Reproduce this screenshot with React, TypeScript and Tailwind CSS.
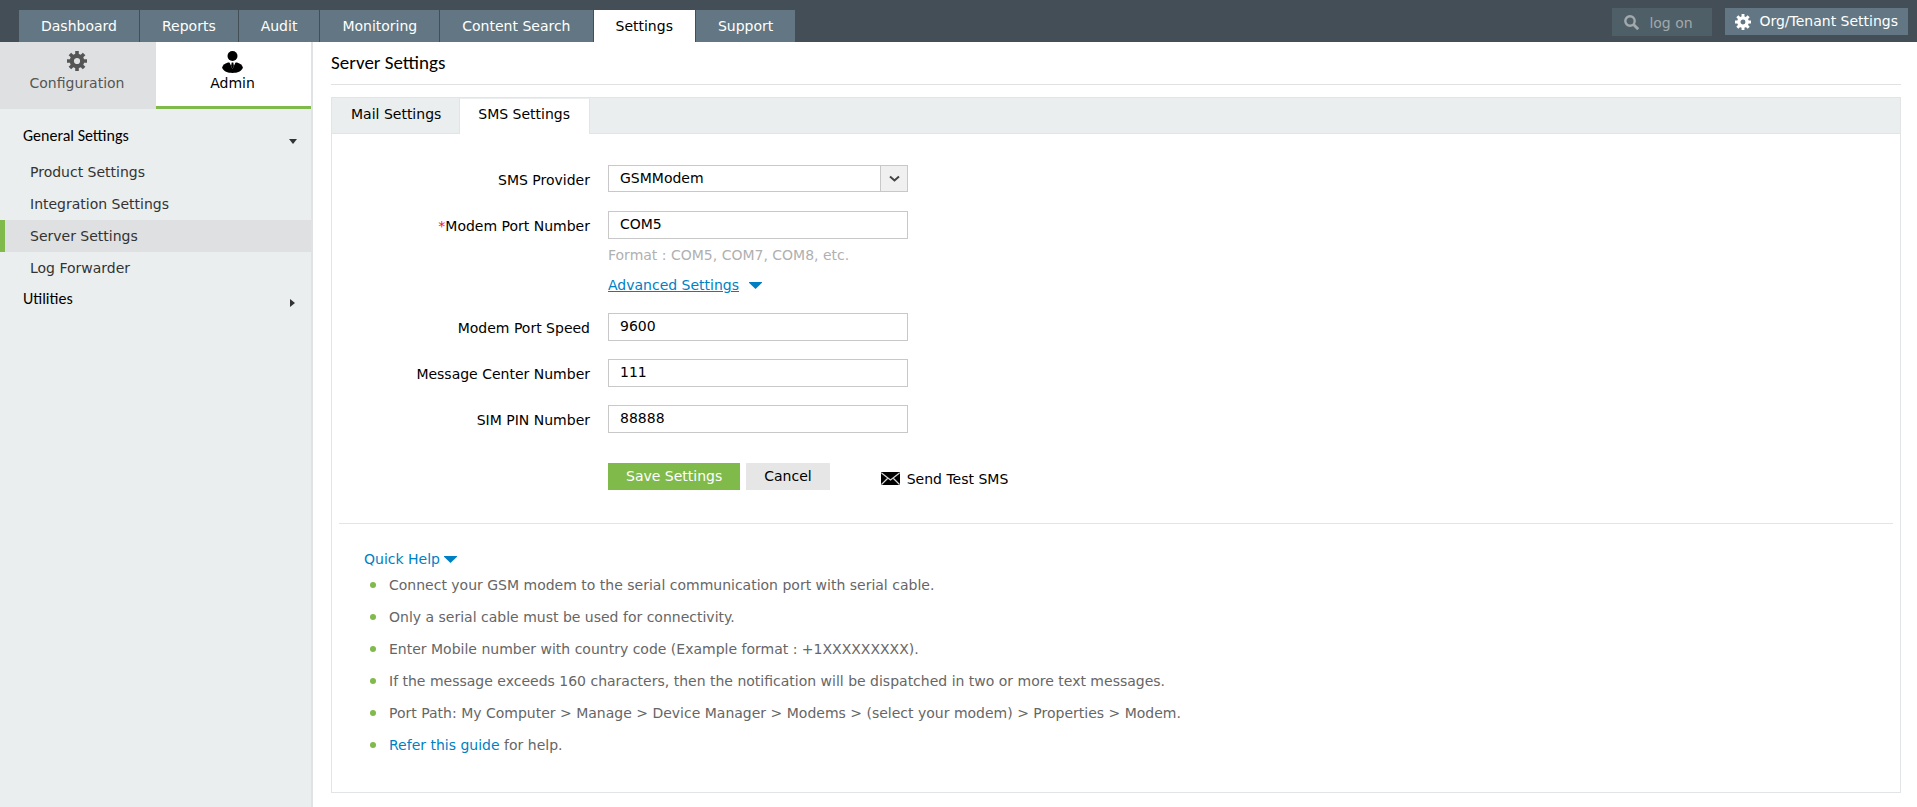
import type { ReactNode } from "react";

const navItems = ["Dashboard", "Reports", "Audit", "Monitoring", "Content Search", "Settings", "Support"];
const sideItems = ["Product Settings", "Integration Settings", "Server Settings", "Log Forwarder"];
const helpLines = [
  "Connect your GSM modem to the serial communication port with serial cable.",
  "Only a serial cable must be used for connectivity.",
  "Enter Mobile number with country code (Example format : +1XXXXXXXXX).",
  "If the message exceeds 160 characters, then the notification will be dispatched in two or more text messages.",
  "Port Path: My Computer > Manage > Device Manager > Modems > (select your modem) > Properties > Modem.",
];

function GearIcon({ className }: { className: string }) {
  return (
    <svg viewBox="0 0 20 20" className={className} fill="none" stroke="currentColor" aria-hidden="true">
      <circle cx="10" cy="10" r="5.200" strokeWidth="4.200" />
      <path
        d="M10 0v4M10 16v4M0 10h4M16 10h4M2.900 2.900l2.900 2.900M14.200 14.200l2.900 2.900M2.900 17.100l2.900-2.900M14.200 5.800l2.900-2.900"
        strokeWidth="3.600"
      />
    </svg>
  );
}

function AdminIcon() {
  return (
    <svg viewBox="0 0 21 22" className="h-[22px] w-[21px]" aria-hidden="true">
      <circle cx="10.5" cy="5" r="5" fill="#000" />
      <path d="M6 11.500h9c3.600 1 5.400 2.800 5.900 5.300C19.500 20.300 15.500 22 10.500 22S1.500 20.300.1 16.800C.6 14.300 2.400 12.500 6 11.500z" fill="#000" />
      <path d="M7.300 11h6.400L10.500 18z" fill="#fff" />
      <path d="M9.700 11.500h1.600l.6 3.500-1.400 3-1.400-3z" fill="#000" />
    </svg>
  );
}

function SearchIcon() {
  return (
    <svg viewBox="0 0 15 15" className="h-[15px] w-[15px] shrink-0" fill="none" stroke="#a1a9ac" aria-hidden="true">
      <circle cx="6" cy="6" r="4.700" strokeWidth="2.400" />
      <path d="M9.500 9.500l4.700 4.700" strokeWidth="2.800" />
    </svg>
  );
}

function CaretDown() {
  return (
    <svg viewBox="0 0 13 7" className="h-[7px] w-[13px]" aria-hidden="true">
      <path d="M0 0h13v.7L6.500 7 0 .7z" fill="#0080c4" />
    </svg>
  );
}

function MailIcon() {
  return (
    <svg viewBox="0 0 19 13" className="h-[13px] w-[19px]" aria-hidden="true">
      <rect width="19" height="13" rx="1" fill="#000" />
      <path d="M.5 1l9 7 9-7M.5 12.500l6-6M18.500 12.500l-6-6" fill="none" stroke="#d8d8d8" strokeWidth="1.200" />
    </svg>
  );
}

function Field({ id, label, required, children }: { id: string; label: string; required?: boolean; children: ReactNode }) {
  return (
    <div className="flex min-h-7 items-start gap-[18px]">
      <label htmlFor={id} className="w-[258px] shrink-0 pt-[5px] text-right leading-5">
        {required && <span className="text-[#f0132f]">*</span>}
        {label}
      </label>
      <div>{children}</div>
    </div>
  );
}

function TextInput({ id, value }: { id: string; value: string }) {
  return (
    <input
      id={id}
      type="text"
      defaultValue={value}
      className="block h-7 w-[300px] border border-[#c8c8c8] bg-white px-[11px] pb-0.5 outline-none"
    />
  );
}

export default function App() {
  return (
    <div className="flex min-h-screen flex-col bg-white font-['Verdana','DejaVu_Sans',sans-serif] text-[14px] text-black">
      <header className="flex h-[42px] items-end justify-between bg-[#434e56] pl-[19px] pr-[9px]">
        <nav className="flex h-8 gap-px">
          {navItems.map((item) => (
            <a
              key={item}
              href="#"
              className={
                item === "Settings"
                  ? "flex items-center bg-white px-[22px] text-black"
                  : "flex items-center bg-[#627783] px-[22px] text-white"
              }
            >
              {item}
            </a>
          ))}
        </nav>
        <div className="flex h-full items-start gap-[13px] pt-2">
          <label className="flex h-7 w-[100px] items-center gap-2.5 bg-[#4f5f67] pl-3">
            <SearchIcon />
            <input
              type="text"
              aria-label="Search"
              placeholder="log on"
              className="w-14 min-w-0 bg-transparent pt-0.5 outline-none placeholder:text-[#a1a9ac]"
            />
          </label>
          <button className="flex h-[27px] items-center gap-2 bg-[#627783] px-2.5 text-white">
            <GearIcon className="h-4 w-4" />
            Org/Tenant Settings
          </button>
        </div>
      </header>

      <div className="flex flex-1">
        <aside className="w-[313px] shrink-0 border-r-2 border-[#e0e2e3] bg-[#eaeeef]">
          <div className="flex h-[67px]">
            <button className="flex w-[156px] flex-col items-center bg-[#dfe0e2] pr-0.5 pt-[9px] text-[#555]">
              <GearIcon className="h-5 w-5" />
              <span className="mt-0.5 leading-5">Configuration</span>
            </button>
            <button className="flex flex-1 flex-col items-center border-b-3 border-[#7fba4a] bg-white pr-0.5 pt-[9px]">
              <AdminIcon />
              <span className="leading-5">Admin</span>
            </button>
          </div>
          <button className="mt-[11px] flex h-8 w-full items-center justify-between pl-[23px] pr-[14px] font-[Carlito,Lato,sans-serif] text-[16px]">
            General Settings
            <svg viewBox="0 0 8 5" className="mt-2.5 h-[5px] w-2" aria-hidden="true">
              <path d="M0 0h8L4 5z" fill="#333" />
            </svg>
          </button>
          <ul className="mt-1">
            {sideItems.map((item) => (
              <li key={item}>
                <a
                  href="#"
                  className={
                    item === "Server Settings"
                      ? "flex h-8 items-center border-l-5 border-[#7fba4a] bg-[#dfe0e2] pl-[25px] text-[#333]"
                      : "flex h-8 items-center pl-[30px] text-[#333]"
                  }
                >
                  {item}
                </a>
              </li>
            ))}
          </ul>
          <button className="flex h-8 w-full items-center justify-between pb-0.5 pl-[23px] pr-4 font-[Carlito,Lato,sans-serif] text-[16px]">
            Utilities
            <svg viewBox="0 0 5 8" className="mt-2 h-2 w-[5px]" aria-hidden="true">
              <path d="M0 0l5 4-5 4z" fill="#333" />
            </svg>
          </button>
        </aside>

        <main className="min-w-0 flex-1 pb-3 pl-[18px] pr-4">
          <h1 className="flex h-[43px] items-center border-b border-[#dfe1e2] font-[Carlito,Lato,sans-serif] text-[19px]">
            Server Settings
          </h1>
          <section className="mt-3 border border-[#e2e4e5]">
            <div className="flex h-9 border-b border-[#e2e4e5] bg-[#eaeeef]">
              <button className="border-r border-[#e2e4e5] pb-0.5 pl-[19px] pr-[18px]">Mail Settings</button>
              <button className="-mb-px mt-px border-r border-[#e2e4e5] bg-white pb-1 pl-[18px] pr-[19px]">SMS Settings</button>
            </div>

            <form className="pt-[31px]">
              <div className="flex flex-col gap-[18px]">
                <Field id="provider" label="SMS Provider">
                  <div className="relative w-[300px]">
                    <select
                      id="provider"
                      className="block h-[27px] w-full appearance-none border border-[#c8c8c8] bg-white pl-[11px] outline-none"
                    >
                      <option>GSMModem</option>
                    </select>
                    <span className="pointer-events-none absolute inset-y-0 right-0 flex w-7 items-center justify-center border border-[#c8c8c8] bg-[#f0f0f0]">
                      <svg viewBox="0 0 11 8" className="h-2 w-[11px]" aria-hidden="true">
                        <path d="M1 1.500l4.500 4 4.500-4" fill="none" stroke="#444" strokeWidth="2" />
                      </svg>
                    </span>
                  </div>
                </Field>
                <Field id="port" label="Modem Port Number" required>
                  <TextInput id="port" value="COM5" />
                  <p className="mt-1.5 leading-5 text-[#b0b0b0]">Format : COM5, COM7, COM8, etc.</p>
                  <a href="#" className="mt-2.5 flex items-center gap-2.5 leading-5 text-[#0080c4]">
                    <span className="underline">Advanced Settings</span>
                    <CaretDown />
                  </a>
                </Field>
                <Field id="speed" label="Modem Port Speed">
                  <TextInput id="speed" value="9600" />
                </Field>
                <Field id="center" label="Message Center Number">
                  <TextInput id="center" value="111" />
                </Field>
                <Field id="pin" label="SIM PIN Number">
                  <TextInput id="pin" value="88888" />
                </Field>
              </div>
              <div className="mt-[30px] flex h-[27px] items-center pl-[276px]">
                <button type="button" className="h-[27px] bg-[#7fba4a] px-[18px] text-white">Save Settings</button>
                <button type="button" className="ml-1.5 h-[27px] bg-[#e6e6e6] px-[18px]">Cancel</button>
                <a href="#" className="ml-[51px] flex items-center gap-[7px] pt-1 leading-5">
                  <MailIcon />
                  Send Test SMS
                </a>
              </div>
            </form>

            <div className="mx-[7px] mt-[33px] border-t border-[#e2e4e5] px-[25px] pb-[31px] pt-[25px]">
              <button className="flex items-center gap-1 leading-5 text-[#0080c4]">
                Quick Help
                <CaretDown />
              </button>
              <ul className="text-[#666]">
                {helpLines.map((line) => (
                  <li key={line} className="flex min-h-8 items-center gap-[13px] pl-1.5">
                    <span className="h-1.5 w-1.5 shrink-0 rounded-full bg-[#7fba4a]" />
                    {line}
                  </li>
                ))}
                <li className="flex min-h-8 items-center gap-[13px] pl-1.5">
                  <span className="h-1.5 w-1.5 shrink-0 rounded-full bg-[#7fba4a]" />
                  <span>
                    <a href="#" className="text-[#0080c4]">Refer this guide</a> for help.
                  </span>
                </li>
              </ul>
            </div>
          </section>
        </main>
      </div>
    </div>
  );
}
